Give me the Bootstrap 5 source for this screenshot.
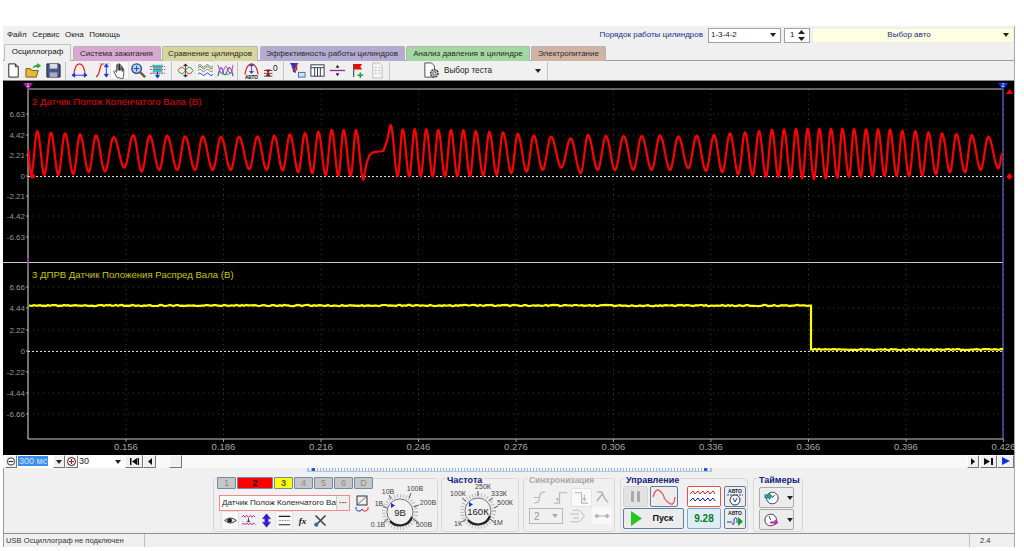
<!DOCTYPE html>
<html lang="ru">
<head>
    <meta charset="UTF-8">
    <meta name="viewport" content="width=device-width, initial-scale=1.0">
    <title>Осциллограф</title>
    <link href="https://cdn.jsdelivr.net/npm/bootstrap@5.3.0/dist/css/bootstrap.min.css" rel="stylesheet">
    <style>
        body { background: #fff; padding: 26px 0 0 3px; margin: 0; font: 8px/1.1 "Liberation Sans", Arial, sans-serif; color: #222; overflow: hidden; white-space: nowrap; }
        .app-win { width: 1012px; background: #f0f0f0; border-right: 1px solid #a8a8a8; }
        .top-row { height: 18px; }
        .menu-item { margin-right: 5.5px; color: #222; }
        .order-lbl { color: #1c2a8c; margin-right: 5px; }
        .fake-sel { height: 15px; background: #fff; border: 1px solid #a0a0a0; padding: 0 2px; font-size: 8px; }
        .sel-caret { width: 0; height: 0; border: 3px solid transparent; border-top: 4px solid #222; border-bottom: 0; }
        .sel-order { width: 73px; margin-right: 3px; }
        .sel-spin { width: 26px; margin-right: 2px; padding-left: 5px; }
        .sel-auto { width: 202px; background: #ffffe2; border-color: #eee; }
        .app-tabs { height: 17px; padding-left: 1px; border-bottom: 1px solid #9c9c9c; flex-wrap: nowrap; }
        .app-tabs .nav-link { height: 15px; margin: 2px 1.5px 0 0; padding: 0; font-size: 8px; line-height: 14px; text-align: center; color: #2a2a2a; border: 1px solid #b4b4b4; border-bottom: 0; border-radius: 2px 2px 0 0; }
        .app-tabs .nav-link.active { height: 17px; margin-top: 0; background: #f0f0f0; color: #111; border-color: #c0c0c0; }
        .tab-osc { width: 67px; }
        .tab-ign { width: 88px; background: #d8a9d0 !important; }
        .tab-cmp { width: 96px; background: #d8d59c !important; }
        .tab-eff { width: 145px; background: #b3abd0 !important; }
        .tab-prs { width: 124px; background: #a4d8a2 !important; margin-right: 1px !important; }
        .tab-pwr { width: 75px; background: #d1b3a4 !important; }
        .tool-row { height: 20px; border-bottom: 1px solid #8a8a8a; }
        .tb-btn { width: 20px; height: 19px; flex: none; }
        .tb-btn svg { width: 17px; height: 17px; display: block; }
        .tb-w19 { width: 19px; }
        .tb-pull { margin-right: -3px; }
        .tb-on { background: #f9f9f9; outline: 1px solid #e4e4e4; outline-offset: -1px; }
        .tb-sep { width: 1px; height: 18px; background: #c4c4c4; margin: 0 3px 0 2px; flex: none; }
        .test-pick { width: 152px; height: 19px; padding: 0 4px 0 30px; font-size: 8.2px; }
        .scope-box { display: block; width: 1011px; height: 374px; background: #000; }
        .scope-box text { font-family: "Liberation Sans", Arial, sans-serif; }
        .scroll-row { height: 13px; background: #f8f8f8; }
        .sb-btn { height: 13px; flex: none; padding: 0; background: #f0f0f0; border: 1px solid; border-color: #fff #777 #777 #fff; border-radius: 0; font-size: 8px; line-height: 10px; color: #111; }
        .sb-input { height: 13px; background: #fff; font-size: 9px; padding-left: 1px; line-height: 13px; flex: none; }
        .sb-picked { background: #3a8fe8; color: #cfe3ff; padding: 0 1px; }
        .bottom-area { height: 65px; border-left: 1px solid #999; padding-left: 209px; }
        .drag-strip { width: 405px; height: 4px; margin-left: 94px; padding: 0 4px; background: repeating-linear-gradient(90deg, #9ab4d8 0 1px, #eef4fc 1px 3px); border: 1px solid #b4c4dc; border-top: 0; }
        .strip-mark { width: 3px; height: 3px; background: #2a5ad0; display: block; }
        .grp-box { height: 54px; margin-top: 6px; border: 1px solid #d8d8d8; border-radius: 3px; position: relative; flex: none; }
        .grp-name { position: absolute; top: -4px; left: 4px; background: #f0f0f0; padding: 0 1px; font-size: 9px; font-weight: 700; color: #14207c; line-height: 10px; }
        .grp-name.is-off { color: #a8a8a8; font-size: 8.4px; }
        .chan-btn { width: 19px; height: 12px; padding: 0; font-size: 9px; line-height: 10px; background: #c6c6c6; color: #8a8a8a; border: 1px solid #6f8ba6; border-radius: 1px; flex: none; }
        .chan-red { width: 36px; background: #f00; color: #111; font-weight: 700; }
        .chan-yel { background: #ff0; color: #555; font-weight: 700; }
        .chan-row { gap: 1px; padding-left: 3px; margin-top: -2px; }
        .chan-name-row { height: 16px; padding-left: 5px; margin-top: 6px; }
        .chan-name { width: 131px; height: 16px; background: #fff; border: 1px solid #f08a8a; font-size: 8.100px; line-height: 14px; padding-left: 2px; overflow: hidden; position: relative; }
        .chan-dots { position: absolute; right: 0; top: 0; width: 13px; height: 14px; background: #eee; text-align: center; font-weight: 700; border-left: 1px solid #ccc; }
        .chan-tools { padding-left: 7px; }
        .chan-tools .tb-btn { width: 18px; }
        .chan-tools .tb-btn svg { width: 15px; height: 15px; }
        .knob-volts { left: 155px; top: 2px; overflow: visible; }
        .knob-freq { left: 3px; top: 3px; overflow: visible; }
        .sync-top { padding: 9px 0 0 5px; }
        .sync-top .tb-btn { width: 21px; }
        .ctl-btn { height: 21px; padding: 0; background: #ececec; border: 1px solid #5d7e9e; border-radius: 2px; flex: none; }
        .ctl-btn svg { display: block; margin: auto; }
        .ctl-off { background: #e2e2e2; border-color: #d4d4d4; }
        .ctl-red { background: #fff; border-color: #e85050; }
        .start-txt { font-size: 9px; font-weight: 700; color: #111; }
        .time-val { background: #ddeefa; color: #0f7a18; font-size: 10px; font-weight: 700; line-height: 19px; text-align: center; border-color: #7fa8cc; }
        .status-row { height: 14px; border-top: 1px solid #8f8f8f; border-left: 1px solid #999; }
        .status-cell { height: 13px; line-height: 13px; border-right: 1px solid #c0c0c0; flex: none; padding-left: 2px; font-size: 7.600px; color: #333; }
    </style>
</head>
<body>
<div class="app-win">
    <div class="top-row d-flex align-items-center ps-1">
        <span class="menu-item">Файл</span><span class="menu-item">Сервис</span><span class="menu-item">Окна</span><span class="menu-item">Помощь</span>
        <div class="ms-auto d-flex align-items-center">
            <span class="order-lbl">Порядок работы цилиндров</span>
            <div class="fake-sel sel-order d-flex justify-content-between align-items-center pe-1"><span>1-3-4-2</span><i class="sel-caret"></i></div>
            <div class="fake-sel sel-spin d-flex justify-content-between align-items-center pe-1"><span>1</span>
                <svg width="7" height="11" viewBox="0 0 7 11"><path d="M3.5 0 7 4H0zM3.5 11 0 7h7z" fill="#222"/></svg>
            </div>
            <div class="fake-sel sel-auto d-flex align-items-center pe-1"><span class="flex-grow-1 text-center" style="color:#1c2a8c">Выбор авто</span><i class="sel-caret"></i></div>
        </div>
    </div>

    <ul class="nav nav-tabs app-tabs">
        <li class="nav-item"><a class="nav-link active tab-osc">Осциллограф</a></li>
        <li class="nav-item"><a class="nav-link tab-ign">Система зажигания</a></li>
        <li class="nav-item"><a class="nav-link tab-cmp">Сравнение цилиндров</a></li>
        <li class="nav-item"><a class="nav-link tab-eff">Эффективность работы цилиндров</a></li>
        <li class="nav-item"><a class="nav-link tab-prs">Анализ давления в цилиндре</a></li>
        <li class="nav-item"><a class="nav-link tab-pwr">Электропитание</a></li>
    </ul>

    <div class="tool-row d-flex align-items-center">
        <span class="tb-btn d-flex justify-content-center align-items-center"><svg viewBox="0 0 18 18"><path d="M4 2h7l3 3v11H4z" fill="#fff" stroke="#222"/><path d="M11 2v3h3" fill="none" stroke="#222"/></svg></span>
        <span class="tb-btn d-flex justify-content-center align-items-center"><svg viewBox="0 0 18 18"><path d="M1 7h5l1 2h7l-2 7H1z" fill="#e8b83c" stroke="#7a5a10"/><path d="M8 7q1-4 5-4V1l4 3-4 3V5q-3 0-5 2z" fill="#2aa52a"/></svg></span>
        <span class="tb-btn d-flex justify-content-center align-items-center"><svg viewBox="0 0 18 18"><path d="M2 2h13l1 1v13H2z" fill="#44598c" stroke="#223"/><path d="M5 2h8v5H5z" fill="#ddd"/><path d="M5 11h8v5H5z" fill="#aab"/></svg></span>
        <i class="tb-sep"></i>
        <span class="tb-btn d-flex justify-content-center align-items-center"><svg viewBox="0 0 18 18"><path d="M3 14Q4 2 9 2t6 12" fill="none" stroke="#e02020" stroke-width="1.3"/><path d="M1 14h16M1 14l3-2v4zM17 14l-3-2v4z" fill="#1a3ad0" stroke="#1a3ad0"/></svg></span>
        <span class="tb-btn tb-pull ms-1 d-flex justify-content-center align-items-center"><svg viewBox="0 0 18 18"><path d="M1 16Q4 14 5 8t4-6" fill="none" stroke="#e02020" stroke-width="1.3"/><path d="M4 2h12" stroke="#888" stroke-dasharray="1 1"/><path d="M12 3v12M10 5l2-3 2 3zM10 13l2 3 2-3z" fill="#1a3ad0" stroke="#1a3ad0"/></svg></span>
        <span class="tb-btn tb-w19 tb-on d-flex justify-content-center align-items-center"><svg viewBox="0 0 18 18"><path d="M6 16 3 10l1-1 2 2V3h1.500v6V2H9v7-6h1.500v6-4H12v5-3h1.500v7l-1 4z" fill="#fff" stroke="#222" stroke-width=".8"/></svg></span>
        <span class="tb-btn tb-w19 d-flex justify-content-center align-items-center"><svg viewBox="0 0 18 18"><circle cx="7" cy="7" r="5" fill="#bcd8f0" stroke="#2a4a7a" stroke-width="1.500"/><path d="M7 4v6M4 7h6" stroke="#1a3ad0"/><path d="m11 11 5 5" stroke="#6a5a2a" stroke-width="2.500"/></svg></span>
        <span class="tb-btn tb-w19 d-flex justify-content-center align-items-center"><svg viewBox="0 0 18 18"><path d="M3 3h12l-2 5 2 3H3l2-3z" fill="#2ad0c0"/><path d="M1 5h16M1 8h16M1 12h16" stroke="#e02060" stroke-dasharray="2 1"/><path d="M9 10v6M7 14l2 3 2-3z" fill="#1a3ad0" stroke="#1a3ad0"/></svg></span>
        <i class="tb-sep ms-1"></i>
        <span class="tb-btn d-flex justify-content-center align-items-center"><svg viewBox="0 0 18 18"><path d="M1 9q4-7 8 0t8 0" fill="none" stroke="#e03030"/><path d="M1 9q4 7 8 0t8 0" fill="none" stroke="#20a030"/><path d="M9 2v14M7 4l2-2 2 2zM7 14l2 2 2-2z" fill="#222" stroke="#222" stroke-width=".7"/></svg></span>
        <span class="tb-btn tb-on d-flex justify-content-center align-items-center"><svg viewBox="0 0 18 18"><path d="M1 4q2-3 4 0t4 0 4 0 4 0M1 9q2-3 4 0t4 0 4 0 4 0" fill="none" stroke="#20a060"/><path d="M1 6q2-3 4 0t4 0 4 0 4 0" fill="none" stroke="#e03030"/><path d="M1 13q2-3 4 0t4 0 4 0 4 0" fill="none" stroke="#2030d0"/></svg></span>
        <span class="tb-btn d-flex justify-content-center align-items-center"><svg viewBox="0 0 18 18"><path d="M1 15Q4 0 6 9t5 0 6 6" fill="none" stroke="#2030d0"/><path d="M1 3q4 15 6 6t5 0 5-6" fill="none" stroke="#e03080"/><path d="M2 10q7 7 14 0" fill="none" stroke="#20a060"/></svg></span>
        <i class="tb-sep"></i>
        <span class="tb-btn d-flex justify-content-center align-items-center"><svg viewBox="0 0 18 18"><path d="M2 13Q4 2 9 2t7 11" fill="none" stroke="#e02020" stroke-width="1.300"/><path d="M9 2v10M7 4l2-2 2 2zM7 10l2 2 2-2z" fill="#1a3ad0" stroke="#1a3ad0" stroke-width=".8"/><text x="9" y="17.500" font-size="5" font-weight="700" text-anchor="middle" fill="#111">АВТО</text></svg></span>
        <span class="tb-btn d-flex justify-content-center align-items-center"><svg viewBox="0 0 18 18"><path d="M1 9h9M1 12h9M1 15h9" stroke="#222" stroke-width=".8"/><path d="M3 8h5l-2 3 2 4H3l2-4z" fill="#a01010"/><text x="13" y="9" font-size="9" text-anchor="middle" fill="#222">0</text></svg></span>
        <i class="tb-sep"></i>
        <span class="tb-btn d-flex justify-content-center align-items-center"><svg viewBox="0 0 18 18"><path d="M1 1h9L7 6v6L4 10V6z" fill="#1a3ad0"/><path d="M8 1v8M3 5l4 5" stroke="#e02020" stroke-width="1.500"/><rect x="10" y="11" width="7" height="5" fill="#cfe0f8" stroke="#4a6ab0"/></svg></span>
        <span class="tb-btn d-flex justify-content-center align-items-center"><svg viewBox="0 0 18 18"><rect x="2" y="3" width="14" height="12" fill="#fff" stroke="#334"/><path d="M2 6h14M6 6v9M9 6v9M12 6v9" stroke="#334"/></svg></span>
        <span class="tb-btn d-flex justify-content-center align-items-center"><svg viewBox="0 0 18 18"><path d="M1 9h16" stroke="#a020a0" stroke-width="1.400"/><path d="M7 6l2-3 2 3zM7 12l2 3 2-3z" fill="#222"/></svg></span>
        <span class="tb-btn d-flex justify-content-center align-items-center"><svg viewBox="0 0 18 18"><path d="M5 2v14" stroke="#222"/><path d="M5 2h9l-2 3 2 3H5z" fill="#e01010"/><path d="M12 11v6M9 14h6" stroke="#20a030" stroke-width="1.600"/></svg></span>
        <span class="tb-btn d-flex justify-content-center align-items-center"><svg viewBox="0 0 18 18"><path d="M4 1h7l3 3v13H4z" fill="#f4f4f4" stroke="#bbb"/><path d="M6 6h2M6 9h2M6 12h2M10 6h2M10 9h2M10 12h2" stroke="#bbb"/></svg></span>
        <i class="tb-sep"></i>
        <div class="test-pick d-flex align-items-center">
            <svg width="17" height="17" viewBox="0 0 18 18"><path d="M2 1h7l3 3v12H2z" fill="#fff" stroke="#444"/><circle cx="12" cy="12" r="4" fill="#bbb" stroke="#333" stroke-width="1.400" stroke-dasharray="2 1"/><circle cx="12" cy="12" r="1.500" fill="#fff" stroke="#333" stroke-width=".7"/></svg>
            <span class="ms-1 flex-grow-1">Выбор теста</span><i class="sel-caret"></i>
        </div>
        <i class="tb-sep"></i>
    </div>

    <svg id="scope" class="scope-box" viewBox="3 81 1011 374"></svg>

    <div class="scroll-row d-flex align-items-center">
        <button class="sb-btn" style="width:12px;margin-left:2px"><svg width="10" height="11" viewBox="0 0 11 11" class="d-block"><circle cx="5.500" cy="5.500" r="4" fill="#fff" stroke="#223"/><path d="M3 5.500h5" stroke="#223" stroke-width="1.200"/></svg></button>
        <div class="sb-input" style="width:36px"><span class="sb-picked">300 мс</span></div>
        <button class="sb-btn" style="width:12px"><i class="sel-caret d-inline-block"></i></button>
        <button class="sb-btn" style="width:13px"><svg width="11" height="11" viewBox="0 0 11 11" class="d-block"><circle cx="5.500" cy="5.500" r="4" fill="#fff" stroke="#223"/><path d="M3 5.500h5M5.500 3v5" stroke="#c01010" stroke-width="1.200"/></svg></button>
        <div class="sb-input d-flex align-items-center justify-content-between pe-1" style="width:47px"><span>30</span><i class="sel-caret"></i></div>
        <button class="sb-btn" style="width:18px"><svg width="9" height="7" viewBox="0 0 9 7"><path d="M0 0h1.500v7H0zM2 3.500 7 0v7zM7.500 0H9v7H7.500z" fill="#111"/></svg></button>
        <button class="sb-btn" style="width:13px"><svg width="4" height="7" viewBox="0 0 4 7"><path d="M4 0v7L0 3.500z" fill="#111"/></svg></button>
        <button class="sb-btn" style="width:13px;margin-left:13px"></button>
        <button class="sb-btn ms-auto" style="width:12px"><svg width="4" height="7" viewBox="0 0 4 7"><path d="M0 0v7l4-3.500z" fill="#111"/></svg></button>
        <button class="sb-btn" style="width:17px;margin-left:1px"><svg width="9" height="7" viewBox="0 0 9 7"><path d="M0 0v7l6-3.500zM7 0h2v7H7z" fill="#111"/></svg></button>
        <button class="sb-btn" style="width:17px"><svg width="8" height="8" viewBox="0 0 8 8"><path d="M0 0v8l8-4z" fill="#1030e0"/></svg></button>
    </div>

    <div class="bottom-area">
        <div class="drag-strip d-flex justify-content-between"><i class="strip-mark"></i><i class="strip-mark"></i></div>
        <div class="d-flex">
            <div class="grp-box" style="width:225px">
                <div class="d-flex chan-row">
                    <button class="chan-btn">1</button><button class="chan-btn chan-red">2</button><button class="chan-btn chan-yel">3</button><button class="chan-btn">4</button><button class="chan-btn">5</button><button class="chan-btn">6</button><button class="chan-btn">D</button>
                </div>
                <div class="d-flex chan-name-row">
                    <div class="chan-name">Датчик Полож Коленчатого Ва<span class="chan-dots">···</span></div>
                    <svg width="16" height="17" viewBox="0 0 16 17" class="ms-1"><rect x="3" y="1" width="10" height="9" fill="#eee" stroke="#333"/><path d="m4 9 8-7" stroke="#777"/><path d="M2 12a3 3 0 0 0 6 2" fill="none" stroke="#1a3ad0"/><path d="M14 12a3 3 0 0 1-6 2" fill="none" stroke="#e02020"/></svg>
                </div>
                <div class="d-flex align-items-center chan-tools">
                    <span class="tb-btn tb-on d-flex justify-content-center align-items-center"><svg viewBox="0 0 18 18"><path d="M2 9q7-6 14 0-7 6-14 0z" fill="#ddd" stroke="#222"/><circle cx="8" cy="9" r="2.800" fill="#222"/></svg></span>
                    <span class="tb-btn d-flex justify-content-center align-items-center"><svg viewBox="0 0 18 18"><path d="M1 5l2-2 2 2 2-2 2 2 2-2 2 2 2-2 2 2" fill="none" stroke="#a020a0" stroke-width="1.200"/><path d="M1 14l2-2 2 2 2-2 2 2 2-2 2 2 2-2 2 2" fill="none" stroke="#a020a0" stroke-width="1.200"/><path d="M9 6v5M7 10h4" stroke="#222"/></svg></span>
                    <span class="tb-btn d-flex justify-content-center align-items-center"><svg viewBox="0 0 18 18"><path d="M9 1 4 7h3v4H4l5 6 5-6h-3V7h3z" fill="#2a20d0" stroke="#5020a0" stroke-width=".6"/></svg></span>
                    <span class="tb-btn tb-on d-flex justify-content-center align-items-center"><svg viewBox="0 0 18 18"><path d="M2 4h14M2 14h14" stroke="#222" stroke-width="1.300"/><path d="M2 9h14" stroke="#555" stroke-dasharray="1 1"/></svg></span>
                    <span class="tb-btn d-flex justify-content-center align-items-center"><svg viewBox="0 0 18 18"><text x="9" y="13" font-family="Liberation Serif, serif" font-style="italic" font-weight="700" font-size="11" text-anchor="middle" fill="#111">fx</text></svg></span>
                    <span class="tb-btn d-flex justify-content-center align-items-center"><svg viewBox="0 0 18 18"><path d="m3 3 12 12M15 3 3 15" stroke="#444" stroke-width="2"/><circle cx="4" cy="14" r="2.500" fill="#3a68b0"/></svg></span>
                </div>
                <svg id="knobV" width="66" height="50" viewBox="0 0 66 50" class="position-absolute knob-volts"></svg>
            </div>
            <div class="grp-box" style="width:78px;margin-left:3px">
                <span class="grp-name">Частота</span>
                <svg id="knobF" width="70" height="50" viewBox="0 0 70 50" class="position-absolute knob-freq"></svg>
            </div>
            <div class="grp-box" style="width:92px;margin-left:4px">
                <span class="grp-name is-off">Синхронизация</span>
                <div class="d-flex sync-top">
                    <span class="tb-btn d-flex justify-content-center align-items-center"><svg viewBox="0 0 18 18"><path d="M3 15Q9 15 9 9T15 3M3 9h6" fill="none" stroke="#b8b8b8" stroke-width="1.200"/></svg></span>
                    <span class="tb-btn d-flex justify-content-center align-items-center"><svg viewBox="0 0 18 18"><path d="M2 15h6V4h8M6 9v4M4 11h4" fill="none" stroke="#b8b8b8" stroke-width="1.200"/></svg></span>
                    <span class="tb-btn tb-on d-flex justify-content-center align-items-center"><svg viewBox="0 0 18 18"><path d="M2 4h7v11h7M12 6v6M10 10l2 2 2-2" fill="none" stroke="#b8b8b8" stroke-width="1.200"/></svg></span>
                    <span class="tb-btn d-flex justify-content-center align-items-center"><svg viewBox="0 0 18 18"><path d="M3 3h5l4 8 3 3M3 13l6-8" fill="none" stroke="#b0b0b0" stroke-width="1.500"/></svg></span>
                </div>
                <div class="d-flex align-items-center" style="padding-left:5px;margin-top:-1px">
                    <div class="fake-sel d-flex justify-content-between align-items-center" style="width:35px;height:16px;background:#f0f0f0;border-color:#b8b8b8;color:#999;padding:0 4px"><span style="font-size:10px">2</span><i class="sel-caret" style="border-top-color:#aaa"></i></div>
                    <svg width="48" height="20" viewBox="0 0 48 20" class="ms-1"><path d="M6 4h6M3 8h9M6 12h6M3 16h9M13 4l5 6-5 6" fill="none" stroke="#b8b8b8"/><rect x="26" y="1" width="20" height="17" fill="#f8f8f8"/><path d="M28 10h16M30 8l3 2-3 2zM42 8l-3 2 3 2z" fill="#b0b0b0" stroke="#b0b0b0"/></svg>
                </div>
            </div>
            <div class="grp-box" style="width:128px;margin-left:5px">
                <span class="grp-name">Управление</span>
                <div class="d-flex" style="padding:7px 0 0 2px">
                    <button class="ctl-btn ctl-off" style="width:25px"><svg width="11" height="13" viewBox="0 0 11 13"><rect x="1" y="1" width="3" height="11" rx="1" fill="#aaa"/><rect x="7" y="1" width="3" height="11" rx="1" fill="#aaa"/></svg></button>
                    <button class="ctl-btn" style="width:28px;margin-left:2px"><svg width="24" height="17" viewBox="0 0 24 17"><path d="M1 9Q4-1 8 3t4 6 5 6 6-6" fill="none" stroke="#e85050" stroke-width="1.200"/></svg></button>
                    <button class="ctl-btn ctl-red" style="width:34px;margin-left:9px"><svg width="30" height="17" viewBox="0 0 30 17"><path d="M1 6l3-3 2 3 3-3 2 3 3-3 2 3 3-3 2 3 3-3 2 3" fill="none" stroke="#e02020"/><path d="M1 13l3-3 2 3 3-3 2 3 3-3 2 3 3-3 2 3 3-3 2 3" fill="none" stroke="#1020d0"/></svg></button>
                    <button class="ctl-btn" style="width:22px;margin-left:3px"><svg width="18" height="18" viewBox="0 0 18 18"><text x="9" y="5" font-size="5" font-weight="700" text-anchor="middle" fill="#222">АВТО</text><path d="M1 7h16" stroke="#1a3ad0" stroke-dasharray="2 1"/><circle cx="9" cy="12" r="5" fill="#fff" stroke="#333"/><path d="m7 10 2 4 2-4" fill="none" stroke="#1a3ad0"/></svg></button>
                </div>
                <div class="d-flex" style="padding:1px 0 0 2px">
                    <button class="ctl-btn d-flex align-items-center" style="width:61px;padding-left:6px"><svg width="13" height="15" viewBox="0 0 13 15" class="m-0"><path d="M1 0v15l11-7.500z" fill="#22c81e"/></svg><span class="start-txt flex-grow-1 text-center">Пуск</span></button>
                    <div class="ctl-btn time-val" style="width:34px;margin-left:3px">9.28</div>
                    <button class="ctl-btn" style="width:22px;margin-left:3px"><svg width="18" height="18" viewBox="0 0 18 18"><text x="9" y="5" font-size="5" font-weight="700" text-anchor="middle" fill="#222">АВТО</text><path d="M1 12h5M8 14V9q2-3 3 0v4" fill="none" stroke="#1a3ad0"/><path d="M8 14q-1 2-2-1" fill="none" stroke="#e02020"/><path d="M12 7v9l5-4.500z" fill="#1a9a20"/></svg></button>
                </div>
            </div>
            <div class="grp-box" style="width:50px;margin-left:5px">
                <span class="grp-name">Таймеры</span>
                <button class="ctl-btn d-flex align-items-center" style="width:35px;margin:8px 0 0 5px;border-color:#aaa;padding-left:4px"><svg width="18" height="18" viewBox="0 0 18 18" class="m-0"><circle cx="10" cy="9" r="7" fill="#fff" stroke="#222"/><path d="m10 9 3-4" stroke="#222"/><path d="M1 5h5V3l4 4-4 4V9H1z" fill="#20a0a0" stroke="#146" stroke-width=".5"/></svg><i class="sel-caret ms-2"></i></button>
                <button class="ctl-btn d-flex align-items-center" style="width:35px;margin:1px 0 0 5px;border-color:#aaa;padding-left:4px"><svg width="18" height="18" viewBox="0 0 18 18" class="m-0"><circle cx="8" cy="9" r="7" fill="#fff" stroke="#222"/><path d="M8 9 6 4" stroke="#222"/><path d="M8 11h5V9l4 3-4 3v-2H8z" fill="#e020d0" stroke="#716" stroke-width=".5"/></svg><i class="sel-caret ms-2"></i></button>
            </div>
        </div>
    </div>

    <div class="status-row d-flex">
        <div class="status-cell" style="width:141px">USB Осциллограф не подключен</div>
        <div class="status-cell" style="width:823px;margin-left:2px"></div>
        <div class="status-cell ms-2 border-0">2.4</div>
    </div>
</div>

<script>
    const NS = 'http://www.w3.org/2000/svg';
    function add(parent, tag, attrs, txt) {
        const el = document.createElementNS(NS, tag);
        for (const k in attrs) el.setAttribute(k, attrs[k]);
        if (txt) el.textContent = txt;
        parent.appendChild(el);
        return el;
    }

    const scope = document.getElementById('scope');
    const LEFT = 28, RIGHT = 1003, TOP = 89, BOTTOM = 439;

    // vertical grid and time axis
    const times = ['0.156', '0.186', '0.216', '0.246', '0.276', '0.306', '0.336', '0.366', '0.396', '0.426'];
    times.forEach((t, i) => {
        const x = 126 + 97.5 * i;
        add(scope, 'path', { d: `M${x} ${TOP}V${BOTTOM}`, stroke: '#3c3c14', 'stroke-dasharray': '1 4' });
        add(scope, 'path', { d: `M${x} ${BOTTOM}v3`, stroke: '#999' });
        add(scope, 'text', { x: x, y: 450, 'font-size': 9.5, fill: '#a8a8a8', 'text-anchor': 'middle' }, t);
    });

    // level axis of both panels
    function levels(list, zeroY) {
        list.forEach(l => {
            if (l.v !== '0') add(scope, 'path', { d: `M${LEFT} ${l.y}H${RIGHT}`, stroke: '#3c3c14', 'stroke-dasharray': '1 4' });
            add(scope, 'path', { d: `M${LEFT - 2} ${l.y}H${LEFT}`, stroke: '#999' });
            add(scope, 'text', { x: LEFT - 3, y: l.y + 3, 'font-size': 8, fill: '#999', 'text-anchor': 'end' }, l.v);
        });
        add(scope, 'path', { d: `M${LEFT} ${zeroY}H${RIGHT}`, stroke: '#ddd', 'stroke-dasharray': '2 2' });
    }
    levels([{ v: '6.63', y: 114 }, { v: '4.42', y: 135 }, { v: '2.21', y: 155 }, { v: '0', y: 176 }, { v: '-2.21', y: 196 }, { v: '-4.42', y: 216 }, { v: '-6.63', y: 237 }], 176.5);
    levels([{ v: '6.66', y: 287 }, { v: '4.44', y: 308 }, { v: '2.22', y: 330 }, { v: '0', y: 351 }, { v: '-2.22', y: 372 }, { v: '-4.44', y: 393 }, { v: '-6.66', y: 414 }], 351.5);

    // frame
    add(scope, 'path', { d: `M${LEFT} ${TOP}H${RIGHT}M3 262.5H${RIGHT}M${LEFT} ${BOTTOM}H${RIGHT}`, stroke: '#c8c8c8' });
    add(scope, 'path', { d: `M${LEFT} ${TOP}V${BOTTOM}`, stroke: '#e0e0e0' });
    add(scope, 'path', { d: `M${LEFT} 258V266`, stroke: '#a020a0' });
    add(scope, 'path', { d: `M${RIGHT} 84V${BOTTOM}`, stroke: '#7a7aff' });

    // extremes of the red trace, read from the reference in zoomed pixels
    // a third item means a straight run (the shelf near x = 375)
    const seg1 = [[24,105],[33,181],[52,48],[73,180],[93,53],[115,180],[135,55],[160,178],[180,58],[206,172],[228,61],[255,170],[281,66],[313,158],[340,60],[365,170],[389,62],[418,165],[441,62],[472,165],[495,64],[525,165],[548,64],[578,165],[603,65],[632,165],[657,65],[688,163],[712,64],[740,165],[763,62],[788,167],[810,58],[835,172],[855,54],[877,175],[895,50],[917,180],[935,45],[955,182],[971,45],[992,183],[1008,45]];
    const seg2 = [[40,195],[50,144,1],[58,122,1],[68,112,1],[100,108,1],[112,75,1],[118,42,1],[122,30,1],[143,184],[158,43],[178,185],[194,42],[212,185],[229,43],[248,185],[265,45],[285,185],[303,45],[322,184],[340,45],[360,184],[377,48],[400,182],[418,50],[440,180],[459,52],[484,175],[503,56],[530,170],[551,61],[578,165],[603,65],[634,158],[662,70],[692,175],[714,60],[743,165],[768,63],[795,165],[821,63],[850,165],[875,63],[905,165],[930,61],[960,165],[985,64],[1015,160]];
    const seg3 = [[50,62],[78,168],[102,60],[127,172],[150,55],[175,178],[195,52],[218,182],[237,48],[258,185],[276,44],[295,186],[312,43],[332,188],[348,42],[367,190],[383,41],[402,192],[418,41],[437,190],[453,41],[472,188],[487,41],[507,186],[522,42],[542,186],[558,43],[578,184],[594,43],[614,183],[630,44],[650,183],[667,47],[687,183],[706,48],[727,182],[745,52],[768,178],[786,55],[810,172],[829,57],[855,172],[875,60],[902,165],[925,65],[955,160],[968,115]];
    const pts = [];
    seg1.forEach(p => pts.push([20 + p[0] / 3, 115 + p[1] / 3]));
    seg2.forEach(p => pts.push([350 + p[0] / 3, 115 + p[1] / 3, p[2]]));
    seg3.forEach(p => pts.push([680 + p[0] / 3, 115 + p[1] / 3]));
    let wave = `M${Math.max(pts[0][0], LEFT + 1)} ${pts[0][1]}`;
    for (let i = 1; i < pts.length; i++) {
        const [x0, y0] = pts[i - 1], [x1, y1, straight] = pts[i];
        if (straight) { wave += `L${x1} ${y1}`; continue; }
        for (let s = 1; s <= 8; s++) {
            const t = s / 8, k = (1 - Math.cos(Math.PI * t)) / 2;
            wave += `L${(x0 + (x1 - x0) * t).toFixed(2)} ${(y0 + (y1 - y0) * k).toFixed(2)}`;
        }
    }
    add(scope, 'path', { d: wave, fill: 'none', stroke: '#f00', 'stroke-width': 2.2, 'stroke-linejoin': 'round' });

    // yellow trace with a little noise
    let seed = 7;
    const noise = () => { seed = (seed * 16807) % 2147483647; return (seed % 1000) / 1000 - 0.5; };
    let yl = 'M29 305.5';
    for (let x = 30; x < 811; x += 2) yl += `L${x} ${(305.5 + noise() * 1.3).toFixed(1)}`;
    yl += 'L811 305.5L811 349.5';
    for (let x = 813; x <= 1003; x += 2) yl += `L${x} ${(349.5 + noise() * 1.1).toFixed(1)}`;
    add(scope, 'path', { d: yl, fill: 'none', stroke: '#ff0', 'stroke-width': 2.2 });

    // titles and markers
    add(scope, 'text', { x: 32, y: 105, 'font-size': 9.6, fill: '#e00000' }, '2 Датчик Полож Коленчатого Вала (В)');
    add(scope, 'text', { x: 32, y: 278, 'font-size': 9.6, fill: '#c8c800' }, '3 ДПРВ Датчик Положения Распред Вала (В)');
    add(scope, 'path', { d: 'M23 83H33L28 90Z', fill: '#a020a0' });
    add(scope, 'text', { x: 28, y: 87, 'font-size': 5, fill: '#fff', 'text-anchor': 'middle' }, '1');
    add(scope, 'path', { d: 'M998 83H1008L1003 90Z', fill: '#1030f0' });
    add(scope, 'text', { x: 1003, y: 87, 'font-size': 5, fill: '#fff', 'text-anchor': 'middle' }, '2');
    add(scope, 'path', { d: 'M1006 94L1009.5 89L1013 94Z', fill: '#f00' });
    add(scope, 'path', { d: 'M1009.500 173L1012.500 176.500L1009.500 180L1006.500 176.500Z', fill: '#f00' });
    add(scope, 'circle', { cx: 32.5, cy: 176, r: 2.5, fill: '#f00' });

    // rotary knobs
    function knob(id, cx, cy, center, labels, ptr) {
        const k = document.getElementById(id);
        add(k, 'circle', { cx, cy, r: 16, fill: 'none', stroke: '#bbb', 'stroke-width': 4, 'stroke-dasharray': '1 2' });
        add(k, 'circle', { cx, cy, r: 13, fill: '#f0f0f0', stroke: '#555', 'stroke-width': 0.8 });
        add(k, 'path', { d: `M${cx - 10} ${cy + 9}A13 13 0 0 0 ${cx + 12} ${cy + 5}`, fill: 'none', stroke: '#222', 'stroke-width': 2.2 });
        add(k, 'path', { d: `M${ptr[0]} ${ptr[1]}l4 2.500-4 2.500z`, fill: '#1030e0' });
        add(k, 'text', { x: cx, y: cy + 3.500, 'font-size': 9.500, fill: '#222', 'text-anchor': 'middle' }, center);
        labels.forEach(l => {
            add(k, 'text', { x: l[1], y: l[2], 'font-size': 7, fill: '#444', 'text-anchor': 'middle' }, l[0]);
            add(k, 'path', { d: `M${l[3]} ${l[4]}L${l[5]} ${l[6]}`, stroke: '#555', 'stroke-width': 1 });
        });
    }
    knob('knobV', 31, 31, '9В', [
        ['0.1В', 9, 46, 15, 41, 19, 38], ['1В', 10, 25, 14, 25, 18, 27], ['10В', 19, 13, 20, 14, 22, 18],
        ['100В', 46, 10, 42, 12, 40, 17], ['200В', 59, 24, 50, 24, 45, 26], ['500В', 55, 46, 49, 41, 44, 38]
    ], [22, 22]);
    knob('knobF', 33, 29, '160К', [
        ['1К', 13, 44, 17, 40, 21, 37], ['100К', 13, 14, 17, 16, 21, 19], ['250К', 38, 7, 33, 9, 33, 14],
        ['333К', 54, 14, 48, 16, 44, 19], ['500К', 60, 23, 53, 24, 49, 26], ['1М', 53, 43, 50, 41, 45, 37]
    ], [24, 20]);
</script>
<script src="https://cdn.jsdelivr.net/npm/bootstrap@5.3.0/dist/js/bootstrap.bundle.min.js"></script>
</body>
</html>
